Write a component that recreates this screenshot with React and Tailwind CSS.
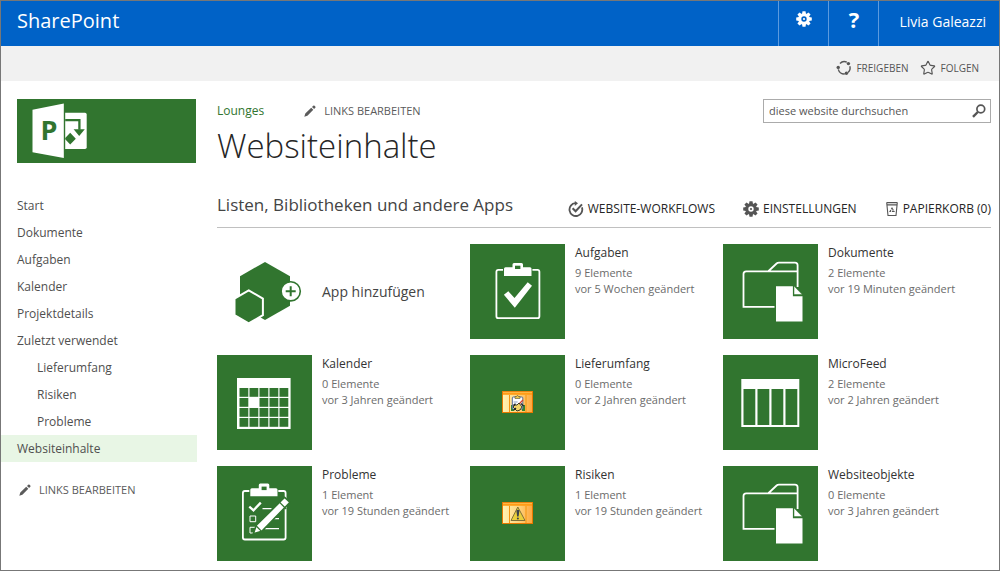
import React from 'react';
import { Star } from 'lucide-react';

const GREEN = '#31752f';

const navItems = [
  { label: 'Start' },
  { label: 'Dokumente' },
  { label: 'Aufgaben' },
  { label: 'Kalender' },
  { label: 'Projektdetails' },
  { label: 'Zuletzt verwendet' },
  { label: 'Lieferumfang', nested: true },
  { label: 'Risiken', nested: true },
  { label: 'Probleme', nested: true },
  { label: 'Websiteinhalte', active: true },
];

const GearIcon = ({ className }) => (
  <svg viewBox="0 0 16 16" className={className} aria-hidden="true">
    <g fill="currentColor">
      {[0, 45, 90, 135, 180, 225, 270, 315].map((angle) => (
        <path key={angle} d="M6 3.2 6.500 0.200h3L10 3.200z" transform={`rotate(${angle} 8 8)`} />
      ))}
      <path
        fillRule="evenodd"
        d="M8 2.200a5.800 5.800 0 1 1 0 11.600A5.800 5.800 0 0 1 8 2.200zm0 3.100a2.700 2.700 0 1 0 0 5.400 2.700 2.700 0 0 0 0-5.400z"
      />
      <circle cx="8" cy="8" r="1.100" />
    </g>
  </svg>
);

const PencilIcon = () => (
  <svg viewBox="0 0 12 12" className="w-3 h-3" fill="currentColor" aria-hidden="true">
    <path d="M0.3 11.7 1.3 8.6 7.2 2.7 9.3 4.8 3.4 10.7zM8 1.9 9.2.7Q9.9.1 10.6.7L11.3 1.4Q11.9 2.1 11.3 2.8L10.1 4z" />
  </svg>
);

const ShareIcon = () => (
  <svg viewBox="0 0 16 16" className="w-4 h-4" aria-hidden="true">
    <g fill="none" stroke="currentColor" strokeWidth="1.4">
      <path d="M4 3.4A6 6 0 0 1 10.8 2.2" />
      <path d="M13.8 6.2A6 6 0 0 1 12 12.5" />
      <path d="M8.8 13.9A6 6 0 0 1 2.3 9.4" />
    </g>
    <g fill="currentColor">
      <circle cx="12.4" cy="3.6" r="1.7" />
      <circle cx="2.2" cy="7.4" r="1.7" />
      <circle cx="10.4" cy="13.2" r="1.7" />
    </g>
  </svg>
);

const SearchIcon = () => (
  <svg viewBox="0 0 14 14" className="w-[14px] h-[14px]" fill="none" stroke="currentColor" aria-hidden="true">
    <circle cx="8.8" cy="5" r="3.9" strokeWidth="1.7" />
    <path d="M5.8 8 1 12.8" strokeWidth="2.4" />
  </svg>
);

const WorkflowIcon = () => (
  <svg viewBox="0 0 16 16" className="w-4 h-4" fill="none" stroke="currentColor" aria-hidden="true">
    <path d="M13.9 6.400A6.400 6.400 0 1 1 7.400 2.200" strokeWidth="1.8" />
    <path d="M6.8 0 10 2.3 6.8 4.9z" fill="currentColor" stroke="none" />
    <path d="M4.6 7.2 7.6 10.3 14 3.4" strokeWidth="2" />
  </svg>
);

const BinIcon = () => (
  <svg viewBox="0 0 14 16" className="w-[14px] h-4" fill="none" stroke="currentColor" aria-hidden="true">
    <path d="M1.5 1.6h11M1.8 3.9h10.4M1.7 1.6 3 14.5h8L12.3 1.6" strokeWidth="1.1" />
    <path d="M7 7 9 10.4H5z" strokeWidth="1.1" strokeDasharray="2.6 .9" />
  </svg>
);

const ProjectLogo = () => (
  <svg viewBox="0 0 70 64" className="w-[70px] h-16" role="img" aria-label="Project">
    <path d="M15.5 10.8 46.8 4.6V59L15.5 53.2z" fill="#fff" />
    <text x="23.5" y="41" fill={GREEN} fontSize="27" fontWeight="700" fontFamily="Open Sans, sans-serif">P</text>
    <path d="M48.2 13.8H68q1.7 0 1.7 1.7v32.8q0 1.7-1.7 1.7H48.2z" fill="#fff" />
    <path d="M48.2 21.2h14.2v9.5" fill="none" stroke={GREEN} strokeWidth="2.3" />
    <path d="M56.6 30.2h11.2L62.2 37zM53.2 33.8l5.6 5.9-5.6 5.9-5-5.3v-1.2z" fill={GREEN} />
  </svg>
);

const AddAppArt = () => (
  <svg viewBox="0 0 95 95" className="w-[95px] h-[95px] shrink-0" aria-hidden="true">
    <path d="M48 18 73 32.2V61.7L48 76 23 61.7V32.2z" fill={GREEN} />
    <path d="M31.7 46.4 45.9 54.6V71.2L31.7 79.4 17.5 71.2V54.6z" fill={GREEN} stroke="#fff" strokeWidth="2" />
    <circle cx="73.7" cy="47.3" r="9.6" fill="#fff" stroke={GREEN} strokeWidth="1.6" />
    <path d="M68.7 47.3h10M73.7 42.3v10" stroke={GREEN} strokeWidth="2" />
  </svg>
);

const TasksArt = () => (
  <>
    <rect x="26.4" y="25.8" width="43" height="48.4" rx="2" fill="none" stroke="#fff" strokeWidth="1.8" />
    <path d="M33 24.5h29.4v4H33z" fill={GREEN} />
    <path d="M34 32v-7.2q0-1.5 1.5-1.5h7V20.5q0-1.5 1.5-1.5h7.5q1.5 0 1.5 1.5v2.8h7q1.5 0 1.5 1.5V32z" fill="#fff" />
    <path d="M45 21.7h5.4V25H45z" fill={GREEN} />
    <path d="M33.9 50.7 38.3 47.2 44.5 54 57.7 38.2 62 41.7 44.8 63.8z" fill="#fff" />
  </>
);

const FolderArt = () => (
  <>
    <path
      d="M51.5 62.8H20.500V30q0-2.700 2.700-2.700H74.300M45.600 27 53.600 19.500Q54.500 18.700 56 18.700H72q2.600 0 2.600 2.600V43"
      fill="none"
      stroke="#fff"
      strokeWidth="1.8"
    />
    <path d="M53 42.2H69.9V52.3H79.5V77.5H53z" fill="#fff" />
    <path d="M71 42 79.3 50.6H71z" fill="#fff" stroke={GREEN} strokeWidth=".5" />
  </>
);

const CalendarArt = () => (
  <>
    <rect x="20" y="23" width="53.6" height="51" fill="#fff" />
    {[33, 43, 53, 63].map((y, row) =>
      [22.5, 32.5, 42.5, 52.5, 62.5].map((x, col) =>
        row === 1 && col === 1 ? null : <rect key={`${x}-${y}`} x={x} y={y} width="8.8" height="8.8" fill={GREEN} />
      )
    )}
  </>
);

const ListArt = () => (
  <>
    <rect x="18.3" y="24" width="58" height="48" fill="#fff" />
    {[20.5, 34.5, 48.5, 62.5].map((x) => (
      <rect key={x} x={x} y="34" width="11.8" height="36" fill={GREEN} />
    ))}
  </>
);

const IssuesArt = () => (
  <>
    <rect x="25.9" y="25" width="42.7" height="48.5" rx="2" fill="none" stroke="#fff" strokeWidth="1.8" />
    <path d="M32.3 23.5h29v4h-29z" fill={GREEN} />
    <path d="M33.3 30.3v-6.5q0-1.5 1.5-1.5h7V19q0-1.5 1.5-1.5h7.5q1.5 0 1.5 1.5v3.3h6.7q1.5 0 1.5 1.5v6.5z" fill="#fff" />
    <path d="M44.6 20.6h5v3.5h-5z" fill={GREEN} />
    <path d="M32.3 40.6 36.5 44.3 43.8 36.6" fill="none" stroke="#fff" strokeWidth="2.3" />
    <path d="M33 50h5.7v5.7H33zM33 61.3h5.7V67H33z" fill="none" stroke="#fff" strokeWidth="1" />
    <path d="M45.5 42.7h9M57 52.7h5M48 62.7h14" stroke="#fff" strokeWidth="1.2" />
    <path
      d="M36.3 67.8 39.3 59.3 67.7 31.3 73 36.3 44.8 65.3z"
      fill="#fff"
      stroke={GREEN}
      strokeWidth="1.6"
    />
    <path d="M61.9 35.6 69.2 43M39 59.8 44.8 65.6" stroke={GREEN} strokeWidth="1.3" />
  </>
);

const ProjectTable = ({ id }) => (
  <>
    <defs>
      <linearGradient id={id} x1="0" x2="1">
        <stop offset="0" stopColor="#fff3b4" />
        <stop offset="0.55" stopColor="#ffd37c" />
        <stop offset="1" stopColor="#ffa63c" />
      </linearGradient>
    </defs>
    <rect x="32.5" y="36.5" width="30" height="21" fill={`url(#${id})`} stroke="#e97900" />
    <path d="M33 37h29v2.8H33z" fill="#ff9d16" />
    <path d="M33 37.3h29" stroke="#ffc35d" strokeWidth=".8" />
    <path d="M39.5 40v17M56 40v17" stroke="#f4940f" strokeWidth="1" />
  </>
);

const DeliverablesArt = () => (
  <>
    <ProjectTable id="deliverables" />
    <path d="M41 50h3v6h-3zM52 50h3v6h-3z" fill="#31852f" />
    <rect x="42.3" y="42" width="10.5" height="12" rx="1" fill="#fff" stroke="#536b9b" strokeWidth="1" />
    <path d="M45 43.5v-2h1.5l1-1.3 1 1.3H50v2z" fill="#edc94d" stroke="#5c5130" strokeWidth=".6" />
    <path d="M43.6 47h4M44 49h2" stroke="#7089b5" strokeWidth=".8" />
    <path d="M53 45 48 50" stroke="#d6402f" strokeWidth="1.3" />
    <path d="M43 52q2-3 4-2l2-2 3 4-2 3-3 1z" fill="#f2d46a" stroke="#272b20" strokeWidth=".9" />
    <path d="M43 50.5 45.5 49M51 48.5l2.5 2.5M44 55l2-2" stroke="#222" strokeWidth="1.2" />
  </>
);

const RisksArt = () => (
  <>
    <ProjectTable id="risks" />
    <path d="M47.8 41 55 54.5H41z" fill="#e9cf3c" stroke="#81713a" strokeWidth="1" strokeLinejoin="round" />
    <path d="M46.4 44.5q1.6-1.5 3 0L48.6 50.6h-1.5z" fill="#39424e" />
    <circle cx="47.9" cy="52.4" r="1" fill="#39424e" />
  </>
);

const apps = [
  { name: 'Aufgaben', count: '9 Elemente', changed: 'vor 5 Wochen geändert', Art: TasksArt },
  { name: 'Dokumente', count: '2 Elemente', changed: 'vor 19 Minuten geändert', Art: FolderArt },
  { name: 'Kalender', count: '0 Elemente', changed: 'vor 3 Jahren geändert', Art: CalendarArt },
  { name: 'Lieferumfang', count: '0 Elemente', changed: 'vor 2 Jahren geändert', Art: DeliverablesArt },
  { name: 'MicroFeed', count: '2 Elemente', changed: 'vor 2 Jahren geändert', Art: ListArt },
  { name: 'Probleme', count: '1 Element', changed: 'vor 19 Stunden geändert', Art: IssuesArt },
  { name: 'Risiken', count: '1 Element', changed: 'vor 19 Stunden geändert', Art: RisksArt },
  { name: 'Websiteobjekte', count: '0 Elemente', changed: 'vor 3 Jahren geändert', Art: FolderArt },
];

const EditLinks = () => (
  <button className="flex items-center gap-2 text-[11px] leading-4 text-[#5b5b5b]">
    <PencilIcon />
    LINKS BEARBEITEN
  </button>
);

const Header = () => (
  <header>
    <div className="flex h-[45px] items-stretch justify-between bg-[#0062c7] text-white">
      <a href="#" className="pl-4 pt-1.5 text-xl leading-7">SharePoint</a>
      <div className="flex">
        <button aria-label="Einstellungen" className="flex w-[50px] justify-center border-l border-[#5c9ade] pt-[10px]">
          <GearIcon className="w-4 h-4" />
        </button>
        <button aria-label="Hilfe" className="flex w-[50px] justify-center border-l border-[#5c9ade] pt-1 text-[22px] font-bold leading-7">
          ?
        </button>
        <button className="border-l border-[#5c9ade] pb-1 pl-5 pr-[13px] text-sm">Livia Galeazzi</button>
      </div>
    </div>
    <div className="flex h-[35px] items-center justify-end gap-3 bg-[#f1f1f1] pr-5 pt-2 text-[10px] leading-4 text-[#555]">
      <button className="flex items-center gap-1">
        <ShareIcon />
        FREIGEBEN
      </button>
      <button className="flex items-center gap-1">
        <Star className="w-4 h-4" strokeWidth={1.7} />
        FOLGEN
      </button>
    </div>
  </header>
);

const Sidebar = () => (
  <aside className="w-[196px] shrink-0">
    <a href="#" className="ml-4 mr-px block bg-[#31752f]">
      <ProjectLogo />
    </a>
    <nav className="mt-[29px]">
      <ul>
        {navItems.map((item) => (
          <li key={item.label} className={item.active ? 'bg-[#e8f6e5]' : ''}>
            <a
              href="#"
              className={`block text-xs leading-[27px] text-[#4f4f4f] ${item.nested ? 'pl-9' : 'pl-4'}`}
            >
              {item.label}
            </a>
          </li>
        ))}
      </ul>
    </nav>
    <div className="mt-5 pl-[18px]">
      <EditLinks />
    </div>
  </aside>
);

const AppTile = ({ app }) => {
  const { Art } = app;
  return (
    <li className="flex gap-[10px]">
      <a href="#" aria-label={app.name} className="shrink-0 bg-[#31752f]">
        <svg viewBox="0 0 95 95" className="w-[95px] h-[95px]" aria-hidden="true">
          <Art />
        </svg>
      </a>
      <div className="whitespace-nowrap text-[11px] leading-4 text-[#6b6b6b]">
        <a href="#" className="mb-[3px] block text-xs leading-[18px] text-[#333]">{app.name}</a>
        <p>{app.count}</p>
        <p>{app.changed}</p>
      </div>
    </li>
  );
};

export default function App() {
  return (
    <div
      className="min-h-screen border border-[#777] bg-white text-[#444]"
      style={{ fontFamily: '"Open Sans", "Noto Sans", sans-serif' }}
    >
      <Header />
      <div className="flex gap-5 pr-2 pt-[18px]">
        <Sidebar />
        <main className="min-w-0 flex-1">
          <div className="flex items-start justify-between">
            <div>
              <div className="flex items-center gap-10 pt-1">
                <a href="#" className="text-xs leading-4 text-[#31752f]">Lounges</a>
                <EditLinks />
              </div>
              <h1 className="mt-1 text-[33px] font-light leading-[46px] text-[#262626]">Websiteinhalte</h1>
            </div>
            <form className="flex h-6 w-[228px] items-center border border-[#ababab] pl-[5px] pr-1 text-[#555]">
              <input
                type="text"
                aria-label="diese website durchsuchen"
                placeholder="diese website durchsuchen"
                className="min-w-0 flex-1 text-[11px] leading-4 outline-none placeholder:text-[#555]"
              />
              <button type="button" aria-label="Suchen">
                <SearchIcon />
              </button>
            </form>
          </div>

          <div className="mt-[22px] flex items-center justify-between border-b border-[#c0c0c0] pb-2">
            <h2 className="whitespace-nowrap text-[17px] leading-7 text-[#444]">Listen, Bibliotheken und andere Apps</h2>
            <div className="flex gap-7 whitespace-nowrap pt-2 text-xs leading-4 text-[#262626]">
              <button className="flex items-center gap-1">
                <span className="text-[#555]"><WorkflowIcon /></span>
                WEBSITE-WORKFLOWS
              </button>
              <button className="flex items-center gap-1">
                <GearIcon className="w-4 h-4 text-[#555]" />
                EINSTELLUNGEN
              </button>
              <button className="flex items-center gap-1">
                <span className="text-[#555]"><BinIcon /></span>
                PAPIERKORB (0)
              </button>
            </div>
          </div>

          <ul className="grid grid-cols-3 gap-y-4 pr-[15px] pt-4">
            <li>
              <a href="#" className="flex items-center gap-[10px] text-sm text-[#444]">
                <AddAppArt />
                App hinzufügen
              </a>
            </li>
            {apps.map((app) => (
              <AppTile key={app.name} app={app} />
            ))}
          </ul>
        </main>
      </div>
    </div>
  );
}
